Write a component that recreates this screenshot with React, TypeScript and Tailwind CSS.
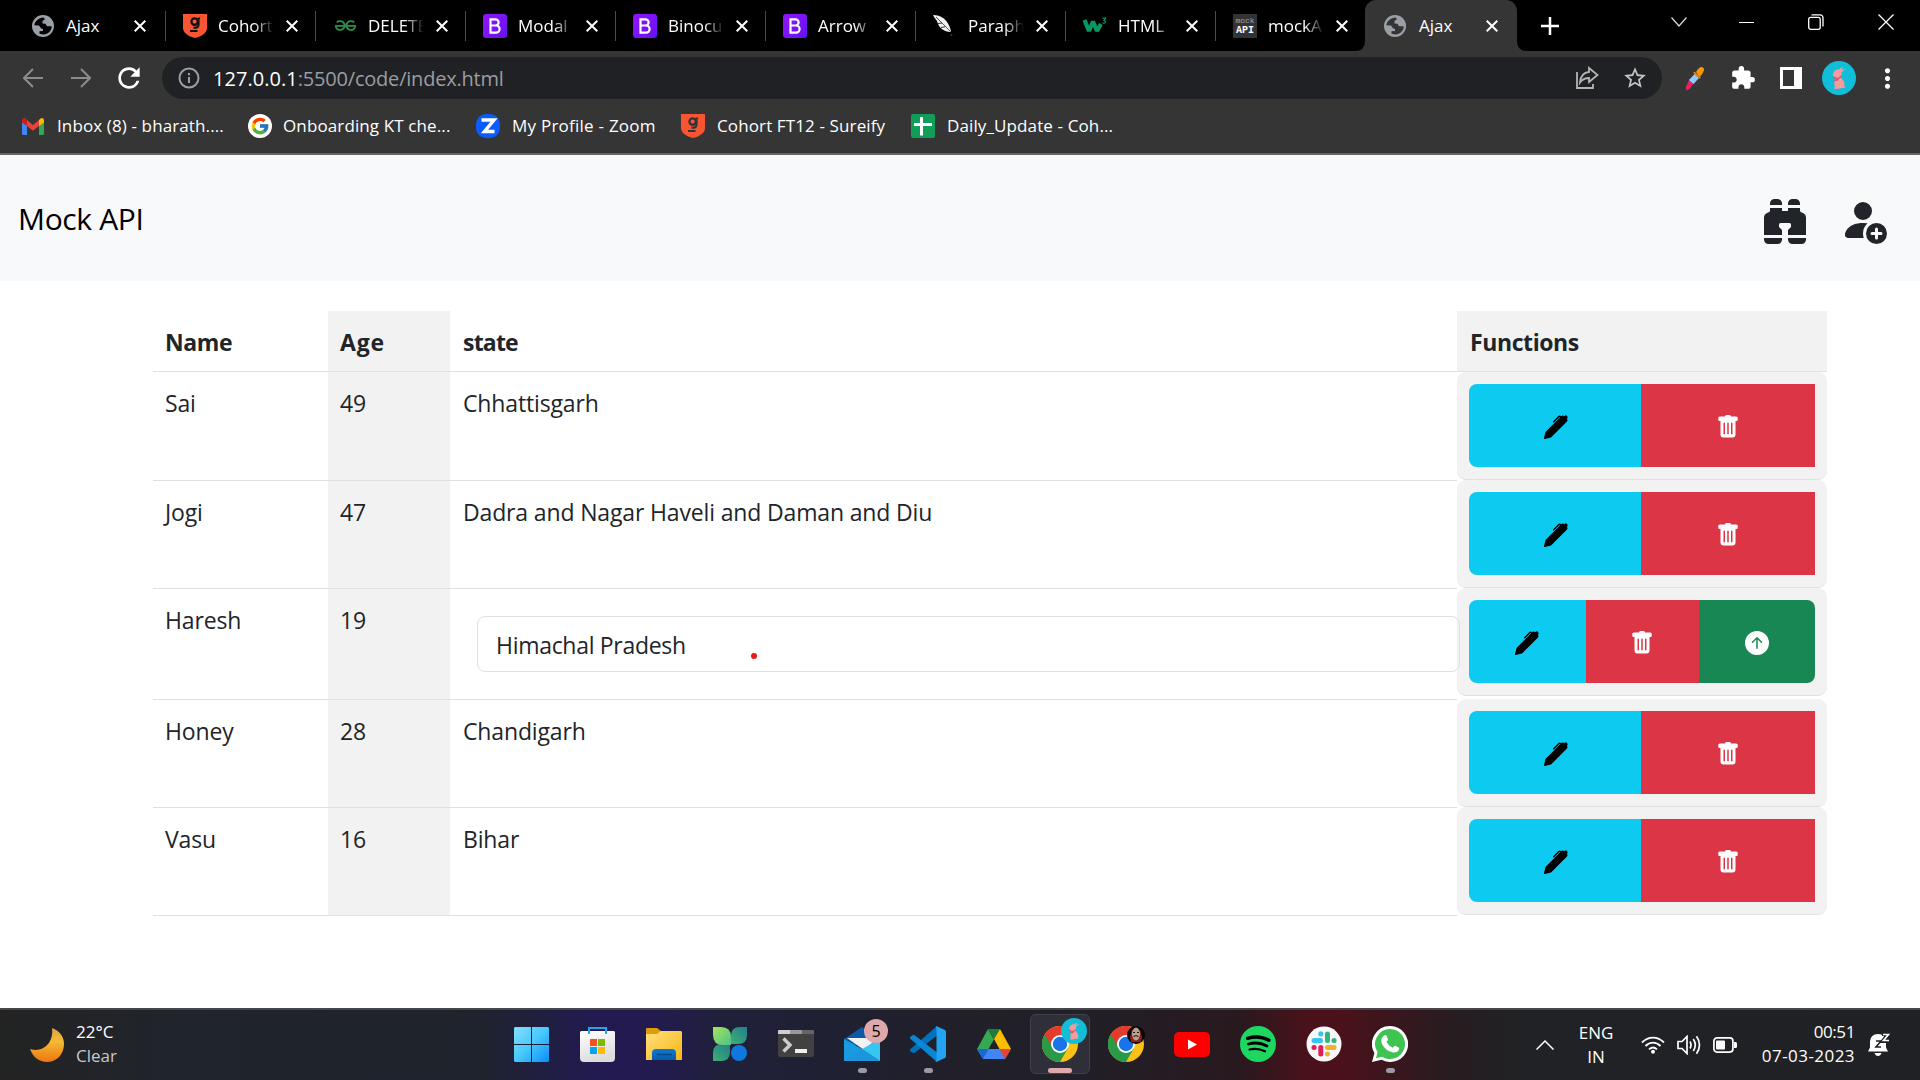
import React from "react";
import { BsBinocularsFill, BsPersonFillAdd, BsPenFill, BsTrashFill, BsArrowUpCircleFill } from "react-icons/bs";
import { MdExtension, MdStarBorder, MdRefresh, MdMoreVert } from "react-icons/md";
import { FcGoogle } from "react-icons/fc";
import { SiGeeksforgeeks } from "react-icons/si";

/* ---------- favicons ---------- */

const Globe = ({ land }: { land: string }) => (
  <svg viewBox="0 0 22 22" className="-ml-px mr-px size-[22px] shrink-0">
    <circle cx="11" cy="11" r="11" fill="#9aa0a6" />
    <path
      d="M2.300 10.300C3 6 6.500 2.800 11.500 2.500L13 4.300 10.500 6v2.500l3 .2 1.500 2.500h4.700c0 4.500-3.500 8-8.200 8.300L7.500 18.800v-2.500l3.500-.3v-2l-2-.8-2-2.700z"
      fill={land}
    />
  </svg>
);

const Shield = ({ ink }: { ink: string }) => (
  <svg viewBox="0 0 24 24" className="size-6 shrink-0">
    <path d="M0 0h24v14c0 4-4 8-12 10C4 22 0 18 0 14z" fill="#fa5532" />
    <g fill="none" stroke={ink} strokeWidth="2.2">
      <circle cx="11.6" cy="7.6" r="3.2" />
      <path d="M14 5.2l3-1M15.5 6v4.500c0 3-2 3.500-5 3.200M7 17h7.500" />
    </g>
  </svg>
);

const BootstrapMark = () => (
  <span className="flex size-6 shrink-0 items-center justify-center rounded-[3px] bg-linear-to-br from-[#9013fe] to-[#6610f2]">
    <svg viewBox="0 0 12 16" className="h-4 w-3" fill="none" stroke="#fff" strokeWidth="2.200">
      <path d="M1.500 1.300h5a3 3 0 0 1 0 6.200h-5h5.500a3.500 3.500 0 0 1 0 7.200h-5.500z" />
    </svg>
  </span>
);

const Quill = () => (
  <svg viewBox="0 0 24 24" className="size-6 shrink-0">
    <path d="M0 1c8 0 15 4 18 16l-1 1C8 17 5 11 4 7L1 3z" fill="#f0f0f0" />
    <path d="M3 3l14 14" stroke="#555" strokeWidth="1" fill="none" />
    <path d="M5 9.500l4-.5M8 13.500l4-.7" stroke="#000" strokeWidth=".8" fill="none" />
    <circle cx="18.500" cy="21" r=".9" fill="#4b3a20" />
  </svg>
);

const W3 = () => (
  <svg viewBox="0 0 24 24" className="size-6 shrink-0" fill="none" stroke="#059862">
    <path d="M1.500 6l4.500 11 4-9.500 4 9.500 4-7" strokeWidth="4.200" strokeLinejoin="bevel" />
    <path d="M19.500 4.200h3.200l-1.700 2.300c2 0 2.200 3.200-1.500 2.500" strokeWidth="1.200" />
  </svg>
);

const MockApi = () => (
  <span className="flex size-6 shrink-0 flex-col items-center justify-center overflow-hidden bg-[#333] leading-[10px]">
    <span className="font-['Liberation_Mono'] text-[8px] text-[#9aa7b4]">mock</span>
    <span className="font-['Liberation_Mono'] text-[10px] font-bold text-white">API</span>
  </span>
);

const Gmail = () => (
  <svg viewBox="0 0 22 17" className="h-[17px] w-[22px] shrink-0">
    <path d="M0 2.500V15.500Q0 17 1.500 17H5V6z" fill="#4285f4" />
    <path d="M17 6v11h3.500q1.500 0 1.500-1.500V2.500z" fill="#34a853" />
    <path d="M5 2l6 5 6-5v6l-6 4.800L5 8z" fill="#ea4335" />
    <path d="M0 2.300Q.5-.8 3.500.5L5 2v6L0 4.400z" fill="#c5221f" />
    <path d="M22 2.300Q21.500-.8 18.500.5L17 2v6l5-3.600z" fill="#fbbc04" />
  </svg>
);

const ZoomMark = () => (
  <svg viewBox="0 0 24 24" className="size-6 shrink-0">
    <rect width="24" height="24" rx="10" fill="#0b5cff" />
    <path d="M5.500 6h12.500L8.500 17.500H18.500" fill="none" stroke="#fff" strokeWidth="3.400" />
  </svg>
);

const Sheets = () => (
  <svg viewBox="0 0 24 24" className="size-6 shrink-0">
    <rect width="24" height="24" rx="2" fill="#0f9d58" />
    <path d="M10.500 3v18.500M3 10.500h18" stroke="#fff" strokeWidth="3" />
  </svg>
);

/* ---------- tab strip ---------- */

const tabs = [
  { icon: <Globe land="#000" />, title: "Ajax" },
  { icon: <Shield ink="#111" />, title: "Cohort" },
  {
    icon: (
      <span className="flex size-6 shrink-0 items-center justify-center">
        <SiGeeksforgeeks className="size-[21px] text-[#2f8d46]" />
      </span>
    ),
    title: "DELETE",
  },
  { icon: <BootstrapMark />, title: "Modal" },
  { icon: <BootstrapMark />, title: "Binocu" },
  { icon: <BootstrapMark />, title: "Arrow" },
  { icon: <Quill />, title: "Paraph" },
  { icon: <W3 />, title: "HTML" },
  { icon: <MockApi />, title: "mockA" },
];

const Cross = () => (
  <svg viewBox="0 0 12 12" className="size-3 shrink-0" stroke="#fff" strokeWidth="2">
    <path d="M.7.7l10.600 10.600M11.300.7L.7 11.300" />
  </svg>
);

function TabStrip() {
  return (
    <div className="flex h-[51px] bg-black pl-4 text-[17px] text-white">
      {tabs.map((t, i) => (
        <div key={i} className="flex h-[51px] w-[150px] shrink-0 items-center pl-[17px]">
          {t.icon}
          <span
            className={`ml-[11px] w-[58px] whitespace-nowrap ${i > 0 ? "[mask-image:linear-gradient(to_right,#000_36px,transparent_56px)]" : ""}`}
          >
            {t.title}
          </span>
          <span className="ml-[10px] flex grow items-center">
            <Cross />
          </span>
          {i < 8 && <span className="h-[30px] w-[1.500px] bg-[#4c4c4c]" />}
        </div>
      ))}
      <svg viewBox="0 0 10 10" className="-ml-[11px] size-[10px] shrink-0 self-end">
        <path d="M10 0v10H0Q10 10 10 0" fill="#353535" />
      </svg>
      <div className="flex h-[51px] w-[152px] shrink-0 items-center rounded-t-[11px] bg-[#353535] pl-[20px]">
        <Globe land="#353535" />
        <span className="ml-[12px] w-[67px]">Ajax</span>
        <Cross />
      </div>
      <svg viewBox="0 0 10 10" className="size-[10px] shrink-0 self-end">
        <path d="M0 0v10h10Q0 10 0 0" fill="#353535" />
      </svg>
      <svg viewBox="0 0 18 18" className="mt-[17px] ml-[14px] size-[18px] shrink-0" stroke="#fff" strokeWidth="2.500">
        <path d="M9 0v18M0 9h18" />
      </svg>
      <div className="mr-[26px] ml-auto flex h-[44px] items-center gap-[54px]">
        <svg viewBox="0 0 16 10" className="-mr-[2px] h-[10px] w-4" fill="none" stroke="#ddd" strokeWidth="1.200">
          <path d="M.5.5L8 9 15.500.5" />
        </svg>
        <span className="h-px w-[15px] bg-white" />
        <svg viewBox="0 0 16 16" className="size-4" fill="none" stroke="#fff" strokeWidth="1.300">
          <rect x=".7" y="3.300" width="11.500" height="12" rx="2" />
          <path d="M3.500.8h8.500a3 3 0 0 1 3 3v8.700" />
        </svg>
        <svg viewBox="0 0 16 16" className="size-4" stroke="#fff" strokeWidth="1.300">
          <path d="M.5.5l15 15M15.500.5l-15 15" />
        </svg>
      </div>
    </div>
  );
}

/* ---------- address bar ---------- */

const Rabbit = ({ className }: { className: string }) => (
  <svg viewBox="0 0 34 34" className={className}>
    <circle cx="17" cy="17" r="17" fill="#12bdd8" />
    <path
      d="M11 12.500c1-3 3.500-4.300 6-4.300l4.500-2.700-2 3.500 5-1.500-5 3.500c.8 2.500-.8 4.200-2 5 3.500 2 5.500 5 4.800 8.500l1.200 2-9 1.500c-2.500 0-3.500-1-1.500-2-1.200-3-.8-6 1-8.500-2.500-1-3.500-2.500-3-5z"
      fill="#f59a9f"
    />
    <path d="M11 16l4.500 2 3.500-2.500M12.500 19.500l4-1" stroke="#d9566c" strokeWidth="1.500" fill="none" />
  </svg>
);

function AddressBar() {
  return (
    <div className="flex h-[54px] items-center">
      <svg viewBox="0 0 20 20" className="ml-[23px] size-5" fill="none" stroke="#8c8c8c" strokeWidth="2">
        <path d="M20 10H1.500M10 1l-9 9 9 9" />
      </svg>
      <svg viewBox="0 0 20 20" className="ml-7 size-5" fill="none" stroke="#8c8c8c" strokeWidth="2">
        <path d="M0 10h18.500M10 1l9 9-9 9" />
      </svg>
      <MdRefresh className="ml-[22px] size-[32px] text-white" />
      <div className="ml-[17px] flex h-[42px] w-[1500px] items-center rounded-full bg-[#202124] pl-4">
        <svg viewBox="0 0 22 22" className="size-[22px]" fill="none" stroke="#9aa0a6" strokeWidth="2">
          <circle cx="11" cy="11" r="9.500" />
          <path d="M11 10v6M11 6v2.200" />
        </svg>
        <span className="relative top-px ml-[13px] text-[20px] tracking-[-0.210px] whitespace-nowrap text-[#9a9da1]">
          <span className="tracking-[0.050px] text-white">127.0.0.1</span>:5500/code/index.html
        </span>
        <svg viewBox="0 0 24 24" className="mr-[12px] ml-auto size-6" fill="none" stroke="#b4b4b4" strokeWidth="1.800">
          <path d="M2 6v16h16v-4" />
          <path d="M14 2l8.500 7-8.500 7v-4c-4 0-6.500 1-9 4.500C5.500 11 8.500 6.500 14 6z" />
        </svg>
        <MdStarBorder className="mr-[14px] ml-[11px] size-[26px] text-[#c4c4c4]" />
      </div>
      <svg viewBox="0 0 20 26" className="ml-[23px] h-[26px] w-5">
        <path d="M4.500 14l4.500 4-4 5.500-3.500 2-.8-3z" fill="#e91e63" />
        <path d="M10 8.500l4 4.500-5.500 6-4.500-4z" fill="#90caf9" />
        <path d="M9.500 6.500l6.500 6-1.800 1.200-6-6z" fill="#f57c00" />
        <path d="M11 7c3-5 5.500-6 7.300-4.300s0 5-3.500 9z" fill="#ff9800" />
      </svg>
      <MdExtension className="ml-[25px] size-[26px] text-white" />
      <svg viewBox="0 0 22 22" className="ml-[24px] h-[22px] w-[22px]">
        <path d="M0 0h22v22H0zM3 3v16h11V3z" fill="#fff" fillRule="evenodd" />
      </svg>
      <Rabbit className="ml-5 size-[34px]" />
      <MdMoreVert className="ml-4 size-[31px] text-white" />
    </div>
  );
}

const bookmarks = [
  { icon: <Gmail />, title: "Inbox (8) - bharath....", box: "w-[226px]", gap: "ml-[13px]" },
  {
    icon: (
      <span className="flex size-6 items-center justify-center rounded-full bg-white">
        <FcGoogle className="size-[20px]" />
      </span>
    ),
    title: "Onboarding KT che...",
    box: "w-[228px]",
    gap: "ml-[11px]",
  },
  { icon: <ZoomMark />, title: "My Profile - Zoom", box: "w-[205px] tracking-[0.240px]", gap: "ml-[12px]" },
  { icon: <Shield ink="#333" />, title: "Cohort FT12 - Sureify", box: "w-[230px]", gap: "ml-3" },
  { icon: <Sheets />, title: "Daily_Update - Coh...", box: "w-[230px]", gap: "ml-[12px]" },
];

function Browser() {
  return (
    <header>
      <TabStrip />
      <div className="h-[104px] border-b-2 border-[#646464] bg-[#353535] text-white">
        <AddressBar />
        <div className="flex h-[42px] items-center pl-[22px] text-[17px] tracking-[0.120px]">
          {bookmarks.map((b) => (
            <div key={b.title} className={`flex shrink-0 items-center whitespace-nowrap ${b.box}`}>
              {b.icon}
              <span className={b.gap}>{b.title}</span>
            </div>
          ))}
        </div>
      </div>
    </header>
  );
}

/* ---------- page ---------- */

const rows = [
  { name: "Sai", age: 49, state: "Chhattisgarh", h: "h-[109px]" },
  { name: "Jogi", age: 47, state: "Dadra and Nagar Haveli and Daman and Diu", h: "h-[108px]" },
  { name: "Haresh", age: 19, state: "Himachal Pradesh", h: "h-[111px]", editing: true },
  { name: "Honey", age: 28, state: "Chandigarh", h: "h-[108px]" },
  { name: "Vasu", age: 16, state: "Bihar", h: "h-[108px]" },
];

function Page() {
  const line = "border-b border-[#dfe0e1]";
  return (
    <main className="h-[853px] bg-white text-[#212529]">
      <nav className="flex h-[126px] items-center bg-[#f8f9fb] pl-[18px]">
        <span className="text-[30px] tracking-[-0.350px] text-black">Mock API</span>
        <BsBinocularsFill className="relative top-[2px] mr-[30px] ml-auto size-12" />
        <BsPersonFillAdd className="relative top-[2px] mr-[33px] size-12" />
      </nav>
      <section className="mt-[30px] ml-[153px] w-[1674px] text-[23px] leading-9 tracking-[-0.150px]">
        <div className="grid h-[61px] grid-cols-[175px_122px_1007px_370px] font-bold tracking-[-0.400px]">
          <div className={`pt-[13px] pl-3 ${line}`}>Name</div>
          <div className={`bg-[#f2f2f2] pt-[13px] pl-3 ${line}`}>
            <span className="tracking-[0.800px]">Age</span>
          </div>
          <div className={`pt-[13px] pl-[13px] ${line}`}>
            <span className="tracking-[-0.800px]">state</span>
          </div>
          <div className={`bg-[#f2f2f2] pt-[13px] pl-[13px] ${line}`}>Functions</div>
        </div>
        {rows.map((r, i) => (
          <div key={r.name} className={`grid grid-cols-[175px_122px_1007px_370px] ${r.h}`}>
            <div className={`pt-[13px] pl-3 ${line}`}>{r.name}</div>
            <div className={`bg-[#f2f2f2] pt-[13px] pl-3 ${line}`}>{r.age}</div>
            <div className={`pt-[13px] pl-[13px] ${line}`}>
              {r.editing ? (
                <div className="relative z-10 mt-[14px] ml-[14px] flex h-[56px] w-[983px] items-center rounded-lg border border-[#dee0e4] pt-0.5 pl-[18px] tracking-[-0.300px]">
                  {r.state}
                  <span className="absolute top-[36px] left-[273px] size-[6px] rounded-full bg-[#e81a1a]" />
                </div>
              ) : (
                r.state
              )}
            </div>
            <div
              className={`flex h-[108px] rounded-[9px] border-b border-[#dfe0e3] bg-[#f2f2f2] px-3 pt-3 ${i > 0 ? "-mt-px" : ""}`}
            >
              <button
                className={`flex h-[83px] items-center justify-center rounded-l-lg bg-[#0dcaf0] pt-[3px] text-black ${r.editing ? "w-[117px] pr-1" : "w-[172px]"}`}
              >
                <BsPenFill className="ml-0.5 size-6" />
              </button>
              <button
                className={`flex h-[83px] items-center justify-center bg-[#dc3545] pt-[3px] text-white ${r.editing ? "w-[113px] pr-0.5" : "w-[174px]"}`}
              >
                <BsTrashFill className="size-6" />
              </button>
              {r.editing && (
                <button className="flex h-[83px] w-[116px] items-center justify-center rounded-r-lg bg-[#198754] pt-[3px] text-white">
                  <BsArrowUpCircleFill className="size-6" />
                </button>
              )}
            </div>
          </div>
        ))}
      </section>
    </main>
  );
}

/* ---------- taskbar ---------- */

const Start = () => (
  <svg viewBox="0 0 35 35" className="mr-0.5 size-[35px]">
    <defs>
      <linearGradient id="win" x1="0" y1="0" x2="35" y2="35" gradientUnits="userSpaceOnUse">
        <stop stopColor="#86dffc" />
        <stop offset=".5" stopColor="#47c8fb" />
        <stop offset="1" stopColor="#0c8df8" />
      </linearGradient>
    </defs>
    <path d="M1 0h16v17H0V1zM18 0h16l1 1v16H18zM0 18h17v17H1l-1-1zM18 18h17v16l-1 1H18z" fill="url(#win)" />
  </svg>
);

const Store = () => (
  <svg viewBox="0 0 35 35" className="mr-0.5 size-[35px]">
    <defs>
      <linearGradient id="bag" x1="0" y1="0" x2="0.300" y2="1">
        <stop stopColor="#fff" />
        <stop offset="1" stopColor="#dcdcdc" />
      </linearGradient>
    </defs>
    <path d="M1 4h33l1 1v26q0 4-4 4H4q-4 0-4-4V5z" fill="url(#bag)" />
    <path d="M9 7V1h17v6" fill="none" stroke="#1fa5e8" strokeWidth="2" />
    <path d="M10 12h7v7h-7z" fill="#f25022" />
    <path d="M18 12h7v7h-7z" fill="#7fba00" />
    <path d="M10 20h7v7h-7z" fill="#00a4ef" />
    <path d="M18 20h7v7h-7z" fill="#ffb900" />
  </svg>
);

const Folder = () => (
  <svg viewBox="0 0 36 34" className="h-[34px] w-9">
    <defs>
      <linearGradient id="fold" x1="0" y1="0" x2="1" y2="1">
        <stop stopColor="#ffdf7e" />
        <stop offset="1" stopColor="#f8b715" />
      </linearGradient>
      <linearGradient id="foldb" x1="0" y1="0" x2="0" y2="1">
        <stop stopColor="#0d7bd2" />
        <stop offset="1" stopColor="#0a5aa8" />
      </linearGradient>
    </defs>
    <path d="M0 2q0-1 1-1h10l4 3v8H0z" fill="#dd9d05" />
    <path d="M0 7h11l4-3h20l1 1v28H0z" fill="url(#fold)" />
    <path d="M6 33v-7q0-4 4-4h16q4 0 4 4v7z" fill="url(#foldb)" />
    <path d="M11 27.500h15" stroke="#074a87" strokeWidth="1.500" />
  </svg>
);

const Clover = () => (
  <svg viewBox="0 0 34 34" className="size-[34px]">
    <defs>
      <linearGradient id="cl1" x1="0" y1="0" x2="1" y2="1">
        <stop stopColor="#a5e65a" />
        <stop offset="1" stopColor="#4fc08c" />
      </linearGradient>
      <linearGradient id="cl2" x1="0" y1="1" x2="1" y2="0">
        <stop stopColor="#3fae72" />
        <stop offset="1" stopColor="#227f8c" />
      </linearGradient>
    </defs>
    <path d="M18 17V9q0-9 9-9h7v8q0 9-9 9z" fill="url(#cl2)" />
    <path d="M0 34v-8q0-9 9-9h8v8q0 9-9 9z" fill="url(#cl2)" />
    <path d="M0 0h8q10 0 10 10v8h-8Q0 18 0 8z" fill="url(#cl1)" />
    <circle cx="26" cy="26" r="8" fill="#0f78dc" />
  </svg>
);

const Terminal = () => (
  <svg viewBox="0 0 36 28" className="mb-0.5 h-7 w-9">
    <path d="M0 5h36v21q0 2-2 2H2q-2 0-2-2z" fill="#414141" />
    <path d="M0 5V2q0-1 1-1h11v4z" fill="#cfcfcf" />
    <path d="M12 1h12v4H12z" fill="#999" />
    <path d="M24 1h11q1 0 1 1v3H24z" fill="#656565" />
    <path d="M5.500 9.500L12 16l-6.500 6.500" fill="none" stroke="#ccc" strokeWidth="3.400" />
    <rect x="17" y="20" width="12" height="4" fill="#eee" />
  </svg>
);

const Mail = () => (
  <svg viewBox="0 0 36 34" className="h-[34px] w-9">
    <path d="M0 12L18 0l18 12v6H0z" fill="#0c59a4" />
    <path d="M3 11h31l-14 12z" fill="#f2f2f2" />
    <path d="M0 12l20 11L36 34H0z" fill="#1c9ae0" />
    <path d="M36 12v22L18 22z" fill="#37c5f1" />
    <path d="M0 34l18-11.500L36 34z" fill="#1b96dd" />
  </svg>
);

const VsCode = () => (
  <svg viewBox="0 0 36 36" className="size-9">
    <path d="M0 23.500q-.5 1 0 1.500l3 2q1 .3 2-.5L27 9.500V0z" fill="#0072bb" />
    <path d="M0 12.500q-.5-1 0-1.500l3-2q1-.3 2 .5L27 26.500V36z" fill="#0a86d6" />
    <path d="M26 0l9 4q1 .5 1 2v24q0 1.500-1 2l-9 4q-1 0 .5-2V2Q25 0 26 0z" fill="#23a3f3" />
  </svg>
);

const Drive = () => (
  <svg viewBox="0 0 34 30" className="h-[30px] w-[34px]">
    <path d="M11 0l6 10.500L11.500 20 6 29.500 0 20z" fill="#34a853" />
    <path d="M11 0h12l-6 10z" fill="#188038" />
    <path d="M23 0l11 20H22.500L17 10z" fill="#fbbc04" />
    <path d="M0 20h34l-6 10H6z" fill="#4285f4" />
    <path d="M0 20h11.500L6 30z" fill="#1967d2" />
    <path d="M34 20H22.500L28 30z" fill="#ea4335" />
  </svg>
);

const ChromeMark = () => (
  <svg viewBox="0 0 36 36" className="size-9">
    <circle cx="18" cy="18" r="18" fill="#fbc116" />
    <path d="M18 18L2.400 9A18 18 0 0 0 18 36l7.800-13.500z" fill="#2b9a47" />
    <path d="M18 18H9L2.400 9A18 18 0 0 1 33.600 9H18z" fill="#e33b2e" />
    <circle cx="18" cy="18" r="9" fill="#fff" />
    <circle cx="18" cy="18" r="7.200" fill="#1a73e8" />
  </svg>
);

const YouTube = () => (
  <svg viewBox="0 0 36 25" className="h-[25px] w-9">
    <rect width="36" height="25" rx="5" fill="#f00" />
    <path d="M14 7.500v10l9-5z" fill="#fff" />
  </svg>
);

const Spotify = () => (
  <svg viewBox="0 0 36 36" className="size-9" fill="none" stroke="#000" strokeLinecap="round">
    <circle cx="18" cy="18" r="18" fill="#1ed760" stroke="none" />
    <path d="M7.500 12.300c7-2 15.500-1.300 21.500 2" strokeWidth="3.400" />
    <path d="M8.500 18c6-1.700 13-1 18.500 2" strokeWidth="2.800" />
    <path d="M9.500 23.500c5.500-1.200 10.500-.8 15.500 1.800" strokeWidth="2.200" />
  </svg>
);

const Slack = () => (
  <svg viewBox="0 0 36 36" className="size-9" fill="none" strokeWidth="5" strokeLinecap="round">
    <circle cx="18" cy="18" r="17.500" fill="#f7f7f7" stroke="none" />
    <path d="M8 14.500h6.500" stroke="#36c5f0" />
    <path d="M14.800 7.800v.1" stroke="#36c5f0" />
    <path d="M21.500 8v6.500" stroke="#2eb67d" />
    <path d="M28 14.500h.1" stroke="#2eb67d" />
    <path d="M21.500 21.500H28" stroke="#ecb22e" />
    <path d="M21.500 28v.1" stroke="#ecb22e" />
    <path d="M14.800 21.500V28" stroke="#e01e5a" />
    <path d="M8 21.500h.1" stroke="#e01e5a" />
  </svg>
);

const WhatsApp = () => (
  <svg viewBox="0 0 36 36" className="size-9">
    <path d="M18 0a18 18 0 1 1-8.500 33.800L0 36l2.400-9A18 18 0 0 1 18 0z" fill="#fff" />
    <path d="M18 3a15 15 0 1 1-8 27.700L4 32.300l1.600-6A15 15 0 0 1 18 3z" fill="#3fc351" />
    <path
      d="M12 9.500c1-1 2.200-.5 2.600.4l1.300 3c.3.8-.2 1.500-1.400 2.800 1.600 3 3.700 4.800 6.500 6 1.200-1.500 1.700-2.200 2.600-1.800l3 1.500c.8.400.7 1.200.4 2.200-.8 2.300-3.700 3.400-6 2.800-6.300-1.700-9.500-5-11.300-9.200-1-2.600-.2-5.700 2.300-7.700z"
      fill="#fff"
    />
  </svg>
);

const apps: { icon: React.ReactNode; open?: boolean; badge?: React.ReactNode; active?: boolean }[] = [
  { icon: <Start /> },
  { icon: <Store /> },
  { icon: <Folder /> },
  { icon: <Clover /> },
  { icon: <Terminal /> },
  {
    icon: <Mail />,
    open: true,
    badge: (
      <span className="absolute top-[9px] left-[35px] flex size-6 items-center justify-center rounded-full bg-[#dfa9ac] text-[16px] text-black">
        5
      </span>
    ),
  },
  { icon: <VsCode />, open: true },
  { icon: <Drive /> },
  { icon: <ChromeMark />, active: true, badge: <Rabbit className="absolute top-2 left-[34px] size-[26px]" /> },
  {
    icon: <ChromeMark />,
    badge: (
      <svg viewBox="0 0 18 18" className="absolute top-4 left-[34px] size-[18px]">
        <circle cx="9" cy="9" r="9" fill="#0b0506" />
        <path d="M4 16l-1-5 2-7h8l2 7-1 5z" fill="#8d1f1c" />
        <ellipse cx="9" cy="8" rx="4" ry="6.500" fill="#b9a18c" />
        <path d="M6 6.500h2M10 6.500h2M6.500 10.500q2.500-1.500 5 0" stroke="#2a1512" strokeWidth="1.200" fill="none" />
      </svg>
    ),
  },
  { icon: <YouTube /> },
  { icon: <Spotify /> },
  { icon: <Slack /> },
  { icon: <WhatsApp />, open: true },
];

function Taskbar() {
  return (
    <footer className="flex h-[72px] border-t-2 border-[#47474b] bg-[linear-gradient(to_right,#232323_0px,#20242b_160px,#1e232d_480px,#221a52_600px,#221b4e_660px,#20203a_720px,#1f2030_860px,#221f28_960px,#202029_1050px,#29191f_1240px,#4b111a_1310px,#4b111a_1340px,#271c20_1450px,#212225_1520px,#202124_1920px)] text-[17px] text-white">
      <div className="flex w-[499px] shrink-0 items-center pl-[30px]">
        <svg viewBox="0 0 34 34" className="size-[34px]">
          <defs>
            <linearGradient id="moon" x1="0" y1="0" x2="0" y2="1">
              <stop stopColor="#d9a050" />
              <stop offset=".4" stopColor="#f4bb32" />
              <stop offset="1" stopColor="#ee7412" />
            </linearGradient>
          </defs>
          <path d="M22 0c8 3 12 9 12 16 0 11-8 18-17 18C9 34 3 29 0 21c13 4 24-6 22-21z" fill="url(#moon)" />
        </svg>
        <div className="-mt-0.5 ml-3 leading-6">
          <div>22°C</div>
          <div className="text-[#c8c8c8]">Clear</div>
        </div>
      </div>
      {apps.map((a, i) => (
        <div key={i} className="relative flex w-[66px] shrink-0 justify-center pt-1">
          <div
            className={`flex h-[60px] w-[60px] items-center justify-center rounded-md ${a.active ? "border border-[#42414b] bg-[#2f2f39]" : ""}`}
          >
            {a.icon}
          </div>
          {a.badge && <div className="absolute top-0 left-0">{a.badge}</div>}
          {a.open && <span className="absolute top-[58px] h-[5px] w-[9px] rounded-full bg-[#9b9aa0]" />}
          {a.active && <span className="absolute top-[58px] h-[5px] w-6 rounded-full bg-[#dfa9ae]" />}
        </div>
      ))}
      <div className="flex grow items-center justify-end">
        <svg viewBox="0 0 18 10" className="h-[10px] w-[18px]" fill="none" stroke="#fff" strokeWidth="1.500">
          <path d="M.5 9.500L9 1l8.500 8.500" />
        </svg>
        <div className="ml-[24px] w-9 text-center leading-6">
          <div>ENG</div>
          <div>IN</div>
        </div>
        <svg viewBox="0 0 24 18" className="ml-[27px] h-[18px] w-6" fill="none" stroke="#fff" strokeWidth="1.800">
          <path d="M1 6.500c6.500-6.500 15.500-6.500 22 0M4.500 10c4.500-4.500 10.500-4.500 15 0M8 13.300c2.500-2.300 5.500-2.300 8 0" />
          <circle cx="12" cy="15.700" r="2" fill="#fff" stroke="none" />
        </svg>
        <svg viewBox="0 0 24 20" className="ml-3 h-5 w-6" fill="none" stroke="#fff" strokeWidth="1.700">
          <path d="M1 6.500h4l5-5v17l-5-5H1zM13 6.500q2 3.500 0 7M16.300 4q4 6 0 12M19.500 1.300q6 8.700 0 17.400" />
        </svg>
        <svg viewBox="0 0 24 16" className="ml-3 h-4 w-6">
          <rect x=".9" y=".9" width="19" height="14.200" rx="3" fill="none" stroke="#fff" strokeWidth="1.700" />
          <rect x="3" y="3.500" width="9" height="9" rx="1" fill="#fff" />
          <path d="M21 5h1.500q1.500 0 1.500 1.500v3q0 1.500-1.500 1.500H21z" fill="#fff" />
        </svg>
        <div className="-mt-0.5 ml-[23px] w-[95px] text-right leading-6 whitespace-nowrap">
          <div className="tracking-[-0.400px]">00:51</div>
          <div className="tracking-[0.450px]">07-03-2023</div>
        </div>
        <svg viewBox="0 0 22 24" className="mr-[30px] ml-[13px] h-6 w-[22px]">
          <path d="M0 18.500l2-4V8.500Q2.500 1 10 1t8 7.500v6l2 4zM6.500 20h7q-1 3-3.500 3t-3.500-3z" fill="#fff" />
          <path d="M8 8h5l-5 6h5" fill="none" stroke="#202124" strokeWidth="1.600" />
          <path d="M14 1h6.500L15 8h6.500" fill="none" stroke="#202124" strokeWidth="4" />
          <path d="M15 1.500h5.500L15.500 7.500H21" fill="none" stroke="#fff" strokeWidth="1.700" />
        </svg>
      </div>
    </footer>
  );
}

export default function App() {
  return (
    <div className="h-[1080px] w-[1920px] overflow-hidden font-['Open_Sans','Noto_Sans',sans-serif]">
      <Browser />
      <Page />
      <Taskbar />
    </div>
  );
}
